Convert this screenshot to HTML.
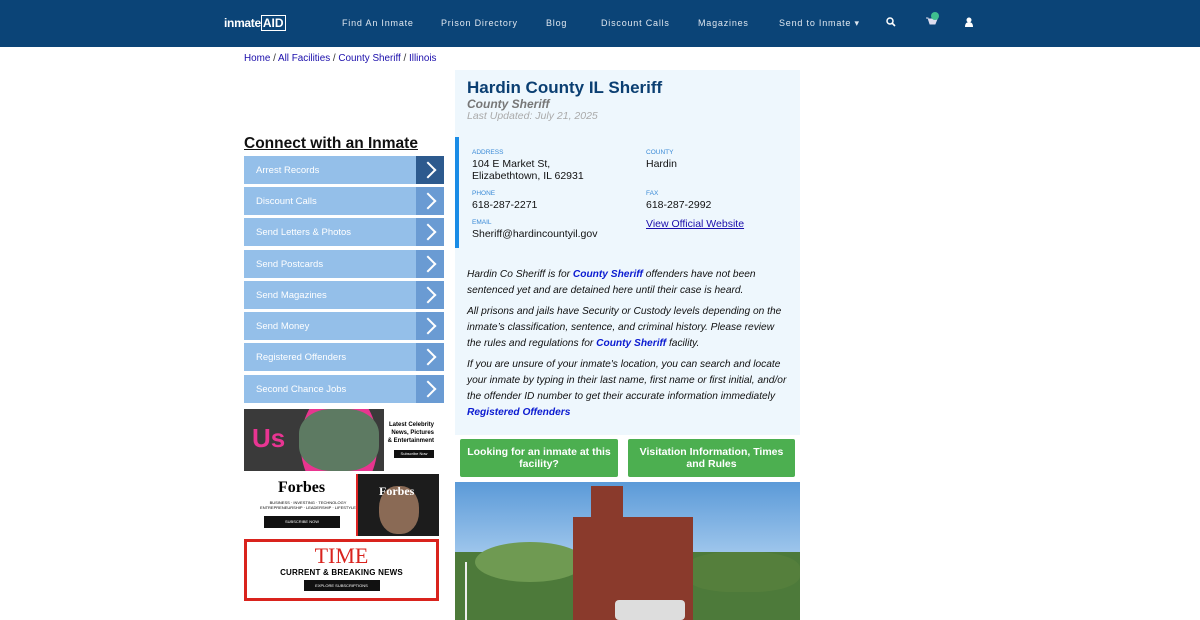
<!DOCTYPE html>
<html><head><style>
*{margin:0;padding:0;box-sizing:border-box}
body{width:1200px;height:620px;overflow:hidden;background:#fff;font-family:"Liberation Sans",sans-serif;position:relative}
.nav{position:absolute;left:0;top:0;width:1200px;height:47px;background:#0b4477}
.nav span{position:absolute;top:18px;color:#dfe7f0;font-size:9px;letter-spacing:.8px}
.logo{position:absolute;left:224px;top:16px;color:#fff;font-size:12px;font-weight:bold;letter-spacing:-.3px}
.a{position:absolute}
.crumb{left:244px;top:53px;font-size:9.9px;color:#333}
.crumb b{font-weight:normal;color:#1a0dab}
.hd{left:244px;top:135px;font-size:15.5px;font-weight:bold;text-decoration:underline;color:#111}
.btn{position:absolute;left:244px;width:200px;height:28px;background:#94bfe9;color:#fff;font-size:9.5px;line-height:30px;padding-left:12px}
.btn i{position:absolute;right:0;top:0;width:28px;height:28px;background:#6a9bd3}
.btn i:after{content:"";position:absolute;left:6px;top:8px;width:10px;height:10px;border-right:2px solid #fff;border-top:2px solid #fff;transform:rotate(45deg)}
.card{left:455px;top:70px;width:345px;height:365px;background:#eef7fd}
.lbl{font-size:6.5px;color:#3a8ad6;margin-bottom:2px}
.val{font-size:10.5px;color:#111;line-height:12px}
.txt{left:467px;width:322px;font-size:10.2px;font-style:italic;color:#111;line-height:16px}
.txt b{color:#0b1bd1}
.gb{position:absolute;top:439px;height:38px;background:#4caf50;color:#fff;font-weight:bold;font-size:10.5px;text-align:center;line-height:12px;padding:7px 6px 0;border-radius:2px}
</style></head><body>
<div class="nav">
<div class="logo">inmate<span style="position:static;color:#fff;font-size:12px;letter-spacing:0;border:1px solid #fff;padding:0 1px;font-weight:bold">AID</span></div>
<span style="left:342px">Find An Inmate</span>
<span style="left:441px">Prison Directory</span>
<span style="left:546px">Blog</span>
<span style="left:601px">Discount Calls</span>
<span style="left:698px">Magazines</span>
<span style="left:779px">Send to Inmate ▾</span>
<svg class="a" style="left:886px;top:17px" width="10" height="10"><circle cx="4" cy="4" r="3" stroke="#fff" stroke-width="1.5" fill="none"/><path d="M6 6 9 9" stroke="#fff" stroke-width="1.6"/></svg>
<svg class="a" style="left:925px;top:12px" width="20" height="16"><path d="M1 6h2l2 6h5l2-5H4" stroke="#dde" fill="#dde" stroke-width="1"/><circle cx="10" cy="4" r="4" fill="#3fbf8f"/></svg>
<svg class="a" style="left:964px;top:17px" width="10" height="10"><circle cx="5" cy="3" r="2.5" fill="#fff"/><path d="M1 10q0-5 4-5t4 5z" fill="#fff"/></svg>
</div>
<div class="a crumb"><b>Home</b> / <b>All Facilities</b> / <b>County Sheriff</b> / <b>Illinois</b></div>
<div class="a hd">Connect with an Inmate</div>
<div class="btn" style="top:156px">Arrest Records<i style="background:#2d5a8e"></i></div>
<div class="btn" style="top:187px">Discount Calls<i></i></div>
<div class="btn" style="top:218px">Send Letters &amp; Photos<i></i></div>
<div class="btn" style="top:250px">Send Postcards<i></i></div>
<div class="btn" style="top:281px">Send Magazines<i></i></div>
<div class="btn" style="top:312px">Send Money<i></i></div>
<div class="btn" style="top:343px">Registered Offenders<i></i></div>
<div class="btn" style="top:375px">Second Chance Jobs<i></i></div>
<div class="a" style="left:244px;top:409px;width:195px;height:62px;background:#fff;overflow:hidden">
 <div class="a" style="left:0;top:0;width:140px;height:62px;background:#3a3a3a"></div>
 <div class="a" style="left:40px;top:-20px;width:110px;height:110px;border-radius:50%;background:#e8358f;transform:scaleX(.7)"></div>
 <div class="a" style="left:55px;top:0;width:80px;height:62px;background:#5d7a62;border-radius:40%"></div>
 <div class="a" style="left:8px;top:14px;color:#e83592;font-weight:bold;font-size:26px">Us</div>
 <div class="a" style="left:142px;top:12px;font-size:6px;font-weight:bold;text-align:right;width:48px;line-height:8px">Latest Celebrity News, Pictures &amp; Entertainment</div>
 <div class="a" style="left:150px;top:41px;width:40px;height:8px;background:#111;color:#fff;font-size:4px;text-align:center;line-height:8px">Subscribe Now</div>
</div>
<div class="a" style="left:244px;top:474px;width:195px;height:62px;background:#fff;overflow:hidden">
 <div class="a" style="left:34px;top:5px;font-family:'Liberation Serif',serif;font-weight:bold;font-size:16px">Forbes</div>
 <div class="a" style="left:14px;top:26px;font-size:4px;width:100px;text-align:center">BUSINESS · INVESTING · TECHNOLOGY<br>ENTREPRENEURSHIP · LEADERSHIP · LIFESTYLE</div>
 <div class="a" style="left:20px;top:42px;width:76px;height:12px;background:#111;color:#fff;font-size:4px;text-align:center;line-height:12px">SUBSCRIBE NOW</div>
 <div class="a" style="left:112px;top:0;width:83px;height:62px;background:#1c1c1c;border-left:2px solid #d22"></div>
 <div class="a" style="left:135px;top:12px;width:40px;height:48px;background:#8a6a55;border-radius:45%"></div>
 <div class="a" style="left:135px;top:10px;color:#fff;font-family:'Liberation Serif',serif;font-weight:bold;font-size:12px">Forbes</div>
</div>
<div class="a" style="left:244px;top:539px;width:195px;height:62px;border:3px solid #d9231d;background:#fff;text-align:center">
 <div style="font-family:'Liberation Serif',serif;color:#d9231d;font-size:22px;line-height:24px;margin-top:2px">TIME</div>
 <div style="font-size:8px;font-weight:bold;letter-spacing:.2px">CURRENT &amp; BREAKING NEWS</div>
 <div style="margin:3px auto 0;width:76px;height:11px;background:#111;color:#fff;font-size:4px;line-height:11px">EXPLORE SUBSCRIPTIONS</div>
</div>
<div class="a card"></div>
<div class="a" style="left:467px;top:78px;font-size:17px;font-weight:bold;color:#0b3f72">Hardin County IL Sheriff</div>
<div class="a" style="left:467px;top:97px;font-size:12px;font-weight:bold;font-style:italic;color:#777">County Sheriff</div>
<div class="a" style="left:467px;top:110px;font-size:10.5px;font-style:italic;color:#aaa">Last Updated: July 21, 2025</div>
<div class="a" style="left:455px;top:137px;width:4px;height:111px;background:#1a8ce6"></div>
<div class="a" style="left:472px;top:149px"><div class="lbl">ADDRESS</div><div class="val">104 E Market St,<br>Elizabethtown, IL 62931</div></div>
<div class="a" style="left:646px;top:149px"><div class="lbl">COUNTY</div><div class="val">Hardin</div></div>
<div class="a" style="left:472px;top:190px"><div class="lbl">PHONE</div><div class="val">618-287-2271</div></div>
<div class="a" style="left:646px;top:190px"><div class="lbl">FAX</div><div class="val">618-287-2992</div></div>
<div class="a" style="left:472px;top:219px"><div class="lbl">EMAIL</div><div class="val">Sheriff@hardincountyil.gov</div></div>
<div class="a val" style="left:646px;top:218px;color:#1a0dab;text-decoration:underline">View Official Website</div>
<div class="a txt" style="top:267px">Hardin Co Sheriff is for <b>County Sheriff</b> offenders have not been sentenced yet and are detained here until their case is heard.</div>
<div class="a txt" style="top:304px">All prisons and jails have Security or Custody levels depending on the inmate’s classification, sentence, and criminal history. Please review the rules and regulations for <b>County Sheriff</b> facility.</div>
<div class="a txt" style="top:357px">If you are unsure of your inmate's location, you can search and locate your inmate by typing in their last name, first name or first initial, and/or the offender ID number to get their accurate information immediately <b>Registered Offenders</b></div>
<div class="gb" style="left:460px;width:158px">Looking for an inmate at this facility?</div>
<div class="gb" style="left:628px;width:167px">Visitation Information, Times and Rules</div>
<div class="a" style="left:455px;top:482px;width:345px;height:138px;overflow:hidden;background:linear-gradient(#5b9ad8,#a9cdef 60%,#d8e8f4)">
 <div class="a" style="left:0;top:70px;width:345px;height:68px;background:#4d7a3a"></div>
 <div class="a" style="left:20px;top:60px;width:110px;height:40px;background:#6f9a52;border-radius:50%"></div>
 <div class="a" style="left:230px;top:70px;width:115px;height:40px;background:#557f3c;border-radius:40%"></div>
 <div class="a" style="left:118px;top:35px;width:120px;height:103px;background:#8a3a2c"></div>
 <div class="a" style="left:136px;top:4px;width:32px;height:40px;background:#8a3a2c"></div>
 <div class="a" style="left:160px;top:118px;width:70px;height:20px;background:#ddd;border-radius:4px"></div>
 <div class="a" style="left:10px;top:80px;width:2px;height:58px;background:#eee"></div>
</div>
</body></html>
